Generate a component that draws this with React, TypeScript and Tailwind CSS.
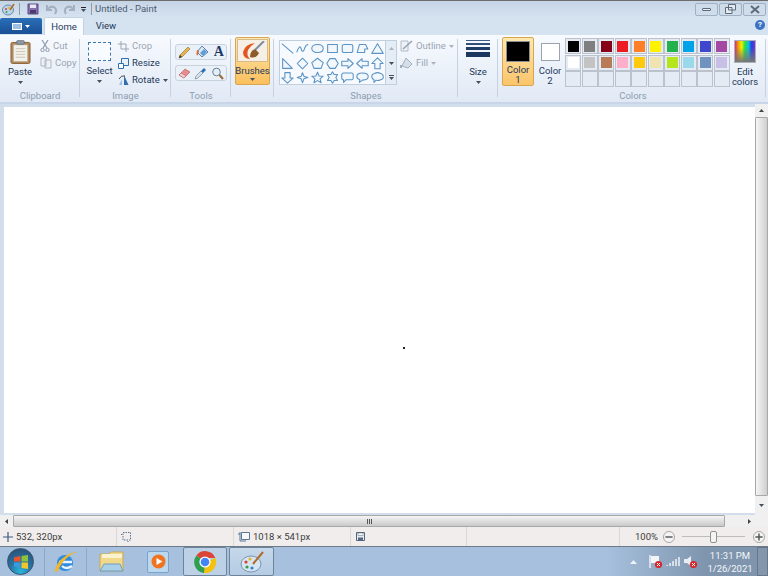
const row1 = ["#000000", "#7f7f7f", "#880015", "#ed1c24", "#ff7f27", "#fff200", "#22b14c", "#00a2e8", "#3f48cc", "#a349a4"];
const row2 = ["#ffffff", "#c3c3c3", "#b97a57", "#ffaec9", "#ffc90e", "#efe4b0", "#b5e61d", "#99d9ea", "#7092be", "#c8bfe7"];

// outlines for the shapes gallery, each in a 15x15 box
const shapes = [
  "M1 2 L14 13",
  "M1 12 C3 5 5 4 6 8 C7 12 9 11 10 7 C11 4 13 3 14 3",
  "M7.5 3 C12 3 14 5 14 7.5 C14 10 12 12 7.5 12 C3 12 1 10 1 7.5 C1 5 3 3 7.5 3 Z",
  "M2 3 H13 V12 H2 Z",
  "M4 3 H11 Q13.5 3 13.5 5 V10 Q13.5 12 11 12 H4 Q1.5 12 1.5 10 V5 Q1.5 3 4 3 Z",
  "M4 3 H11 L13.5 8 L10 8 V12 H1.5 Z",
  "M7.5 2 L14 13 H1 Z",
  "M2 2 L13 13 H2 Z",
  "M7.5 1.5 L13.5 7.5 L7.5 13.5 L1.5 7.5 Z",
  "M7.5 1.5 L14 6.5 L11.5 13 H3.5 L1 6.5 Z",
  "M4.5 2 H10.5 L14 7.5 L10.5 13 H4.5 L1 7.5 Z",
  "M1 5 H8 V2 L14 7.5 L8 13 V10 H1 Z",
  "M14 5 H7 V2 L1 7.5 L7 13 V10 H14 Z",
  "M7.5 1 L14 7.5 H10.5 V13.5 H4.5 V7.5 H1 Z",
  "M4.5 2 H10.5 V8 H14 L7.5 14 L1 8 H4.5 Z",
  "M7.5 2 L9 6 L13.5 7.5 L9 9 L7.5 13.5 L6 9 L1.5 7.5 L6 6 Z",
  "M7.5 1.5 L9.3 5.8 L14 6 L10.4 9 L11.6 13.5 L7.5 11 L3.4 13.5 L4.6 9 L1 6 L5.7 5.8 Z",
  "M7.5 1 L9.3 4.2 L13.2 4.2 L11.3 7.5 L13.2 10.8 L9.3 10.8 L7.5 14 L5.7 10.8 L1.8 10.8 L3.7 7.5 L1.8 4.2 L5.7 4.2 Z",
  "M3 2.5 H12 Q14 2.5 14 4.5 V8 Q14 10 12 10 H6 L3 13 V10 Q1 10 1 8 V4.5 Q1 2.5 3 2.5 Z",
  "M7.5 2.5 C12 2.5 14 4 14 6.5 C14 9 12 10.5 7.5 10.5 L4 13 L4.5 10 C2.5 9.5 1 8.5 1 6.5 C1 4 3 2.5 7.5 2.5 Z",
  "M4 3 Q7.5 1 11 3 Q14 3.5 14 6.5 Q14.5 9.5 11 10 Q8 11.5 6 10.5 L3.5 13 L3.5 10 Q1 9 1 6.5 Q1 3.5 4 3 Z",
];

function Caret({ className = "" }: { className?: string }) {
  return (
    <svg width="5" height="3" viewBox="0 0 5 3" className={className}>
      <path d="M0 0 H5 L2.5 3 Z" fill="#45505e" />
    </svg>
  );
}

function GroupLabel({ children }: { children: string }) {
  return <div className="absolute bottom-0 left-0 right-0 text-center text-[9.5px] leading-[12px] text-[#8d9db0]">{children}</div>;
}

function Separator() {
  return <div className="absolute bottom-[5px] right-0 top-[4px] w-px bg-[#c5d2e2]" />;
}

function Group({ width, label, children }: { width: string; label?: string; children: React.ReactNode }) {
  return (
    <div className={`relative h-full shrink-0 ${width}`}>
      {children}
      {label ? <GroupLabel>{label}</GroupLabel> : null}
      <Separator />
    </div>
  );
}

function PasteIcon() {
  return (
    <svg width="21" height="24" viewBox="0 0 22 25">
      <rect x="1" y="2.5" width="20" height="22" rx="1.5" fill="#b48a5c" stroke="#8a6236" />
      <rect x="3.5" y="5" width="15" height="17.5" fill="#f3f1e8" stroke="#a9a594" strokeWidth="0.6" />
      <path d="M6 9 H16 M6 12 H16 M6 15 H16 M6 18 H16" stroke="#c8c6bb" />
      <rect x="7" y="0.5" width="8" height="4" rx="1" fill="#8d98a6" stroke="#5e6773" strokeWidth="0.6" />
    </svg>
  );
}

function ToolsGrid() {
  return (
    <div className="flex flex-col gap-[5px] pl-[4px] pt-[9px]">
      <div className="flex h-[16px] w-[52px] items-center justify-around rounded-[3px] border border-[#c8d3e0] bg-[#eaf0f8]">
        <svg width="13" height="13" viewBox="0 0 13 13"><path d="M1 12 L2 9 L10 1 L12 3 L4 11 Z" fill="#e8b54a" stroke="#8a6a2e" strokeWidth="0.6" /><path d="M1 12 L2 9 L4 11 Z" fill="#333" /></svg>
        <svg width="14" height="14" viewBox="0 0 14 14"><path d="M7 1 L13 7 L7 12 L2 7 Z" fill="#dfeaf5" stroke="#5a85b2" /><path d="M2 5 Q1 9 2 11 Q3.5 9 4 6 Z" fill="#e0662a" /><path d="M5 8 L9 4 L12 7 L8 11 Z" fill="#5f9fd8" /></svg>
        <span className="font-['Liberation_Serif',serif] text-[14px] font-bold leading-none text-[#1d3a66]">A</span>
      </div>
      <div className="flex h-[16px] w-[52px] items-center justify-around rounded-[3px] border border-[#c8d3e0] bg-[#eaf0f8]">
        <svg width="13" height="13" viewBox="0 0 13 13"><path d="M1 8 L7 2 L12 5 L6 11 Z" fill="#e88a8e" stroke="#a8595d" strokeWidth="0.6" /><path d="M1 8 L3 6 L8 9 L6 11 Z" fill="#f4d3d3" stroke="#a8595d" strokeWidth="0.5" /></svg>
        <svg width="13" height="13" viewBox="0 0 13 13"><path d="M1 12 L2 9 L7 4 L9 6 L4 11 Z" fill="#d6e3ee" stroke="#66788c" strokeWidth="0.6" /><path d="M7 4 L10 1 L12 3 L9 6 Z" fill="#2a6fb5" /></svg>
        <svg width="13" height="13" viewBox="0 0 13 13"><circle cx="5.5" cy="5" r="3.8" fill="#e4eef7" stroke="#6b7f94" /><path d="M8.5 8 L12 12" stroke="#9b6a3a" strokeWidth="2" /></svg>
      </div>
    </div>
  );
}

function Swatch({ color }: { color?: string }) {
  return (
    <div className="h-[16px] w-[16px] border border-[#bbc2cb] bg-[#e4ebf5] p-[1.5px]">
      {color ? <div className="h-full w-full" style={{ background: color }} /> : null}
    </div>
  );
}

function Ribbon() {
  return (
    <div className="flex h-[67px] bg-gradient-to-b from-[#f7fafe] to-[#e1e9f5] text-[9.5px] leading-[12px] text-[#1e395b]">
      <Group width="w-[80px]" label="Clipboard">
        <div className="flex">
          <div className="flex w-[40px] flex-col items-center pt-[5px]">
            <PasteIcon />
            <span className="mt-[2px]">Paste</span>
            <Caret className="mt-[3px]" />
          </div>
          <div className="flex flex-col gap-[5px] pt-[5px] text-[#9aa5b3]">
            <div className="flex h-[12px] items-center gap-[3px]">
              <svg width="10" height="12" viewBox="0 0 10 12"><path d="M2 0 L7 8 M8 0 L3 8" stroke="#8f9bab" strokeWidth="1.2" /><circle cx="2.5" cy="10" r="1.7" fill="none" stroke="#8f9bab" /><circle cx="7.5" cy="10" r="1.7" fill="none" stroke="#8f9bab" /></svg>
              Cut
            </div>
            <div className="flex h-[12px] items-center gap-[3px]">
              <svg width="12" height="12" viewBox="0 0 12 12"><path d="M1 1 H6 V9 H1 Z M5 3 H11 V11 H5 Z" fill="#eef2f7" stroke="#aeb7c3" /></svg>
              Copy
            </div>
          </div>
        </div>
      </Group>

      <Group width="w-[91px]" label="Image">
        <div className="flex pl-[7px]">
          <div className="flex w-[25px] flex-col items-center pt-[7px]">
            <div className="h-[19px] w-[23px] border border-dashed border-[#3f78ae] bg-[#f8fbff]" />
            <span className="mt-[4px]">Select</span>
            <Caret className="mt-[3px]" />
          </div>
          <div className="flex flex-col gap-[5px] pl-[6px] pt-[5px]">
            <div className="flex h-[12px] items-center gap-[3px] text-[#9aa5b3]">
              <svg width="11" height="11" viewBox="0 0 11 11"><path d="M3 0 V8 H11 M0 3 H8 V11" fill="none" stroke="#9aa5b3" /></svg>
              Crop
            </div>
            <div className="flex h-[12px] items-center gap-[3px]">
              <svg width="11" height="11" viewBox="0 0 11 11"><path d="M3.5 .5 H10.5 V7.5 H3.5 Z" fill="#e9f1fa" stroke="#2f6fb0" /><path d="M.5 5.5 H5.5 V10.5 H.5 Z" fill="#fff" stroke="#2f6fb0" /></svg>
              Resize
            </div>
            <div className="flex h-[12px] items-center gap-[3px]">
              <svg width="11" height="12" viewBox="0 0 11 12"><path d="M6 1 L10.5 11 H6 Z" fill="#2f6fb0" /><path d="M4 5 L1 11 H4 Z" fill="#9fc0de" /><path d="M1 5 Q3 1 7 2" fill="none" stroke="#4b4b4b" /></svg>
              <span>Rotate</span>
              <Caret />
            </div>
          </div>
        </div>
      </Group>

      <Group width="w-[60px]" label="Tools">
        <ToolsGrid />
      </Group>

      <Group width="w-[43px]">
        <div className="ml-[4px] mt-[2px] flex h-[48px] w-[35px] flex-col items-center rounded-[2px] border border-[#d8a650] bg-gradient-to-b from-[#fde9ad] to-[#fbbf5c]">
          <div className="mt-[1px] flex h-[23px] w-[31px] items-center justify-center border border-[#d8b98a] bg-[#f5efe6]">
            <svg width="24" height="20" viewBox="0 0 24 20">
              <path d="M14 2 Q4 3 2 11 Q2 18 9 18 Q5 14 7 9 Q9 5 14 2 Z" fill="#e2561f" />
              <path d="M23 0 L14 9" stroke="#7b8da3" strokeWidth="2" />
              <path d="M14 8 Q9 10 9 16 Q15 18 18 12 Z" fill="#8f5a2a" />
            </svg>
          </div>
          <span className="mt-[3px]">Brushes</span>
          <Caret className="mt-[1px]" />
        </div>
      </Group>

      <Group width="w-[184px]" label="Shapes">
        <div className="ml-[5px] mt-[5px] flex h-[45px] w-[118px] border border-[#c0cedd] bg-[#f6f9fd]">
          <div className="grid flex-1 grid-cols-[repeat(7,15px)] grid-rows-[repeat(3,14.5px)]">
            {shapes.map((d) => (
              <svg key={d} width="15" height="15" viewBox="-1 -1 17 17">
                <path d={d} fill="#f2f7fc" stroke="#5a93c5" strokeWidth="1.2" strokeLinejoin="round" />
              </svg>
            ))}
          </div>
          <div className="flex w-[11px] flex-col items-center border-l border-[#c0cedd] bg-[#e4ecf6]">
            <div className="flex h-[15px] items-center"><svg width="5" height="3" viewBox="0 0 5 3"><path d="M0 3 H5 L2.5 0 Z" fill="#a8b3c0" /></svg></div>
            <div className="flex h-[15px] items-center"><Caret /></div>
            <div className="flex h-[13px] flex-col items-center justify-center gap-[1px]"><div className="h-px w-[5px] bg-[#45505e]" /><Caret /></div>
          </div>
        </div>
        <div className="absolute left-[126px] top-[5px] flex flex-col gap-[5px] text-[#9aa5b3]">
          <div className="flex h-[12px] items-center gap-[3px]">
            <svg width="13" height="12" viewBox="0 0 13 12"><path d="M1 1 H8 V11 H1 Z" fill="#eef2f7" stroke="#b0bac6" /><path d="M3 9 L12 1" stroke="#98a5b4" strokeWidth="1.6" /></svg>
            Outline
            <svg width="5" height="3" viewBox="0 0 5 3"><path d="M0 0 H5 L2.5 3 Z" fill="#a8b3c0" /></svg>
          </div>
          <div className="flex h-[12px] items-center gap-[3px]">
            <svg width="13" height="12" viewBox="0 0 13 12"><path d="M6 1 L12 7 L8 11 L2 9 Z" fill="#d6dee8" stroke="#a2afbf" /><path d="M1 8 V11" stroke="#a2afbf" strokeWidth="2" /></svg>
            Fill
            <svg width="5" height="3" viewBox="0 0 5 3"><path d="M0 0 H5 L2.5 3 Z" fill="#a8b3c0" /></svg>
          </div>
        </div>
      </Group>

      <Group width="w-[40px]">
        <div className="flex flex-col items-center pt-[5px]">
          <div className="flex w-[24px] flex-col gap-[2px]">
            <div className="h-px bg-[#3c5b85]" />
            <div className="h-[2px] bg-[#2f4e78]" />
            <div className="h-[3px] bg-[#1f3c66]" />
            <div className="h-[5px] bg-[#1c3860]" />
          </div>
          <span className="mt-[9px]">Size</span>
          <Caret className="mt-[3px]" />
        </div>
      </Group>

      <div className="relative flex h-full flex-1 pl-[4px] pt-[2px]">
        <div className="flex h-[49px] w-[32px] flex-col items-center rounded-[2px] border border-[#d8a650] bg-gradient-to-b from-[#fde9ad] to-[#fbc46a] pt-[3px]">
          <div className="h-[24px] w-[24px] border border-[#8a8f96] bg-black" />
          <span className="mt-[3px] text-center leading-[10px]">Color<br />1</span>
        </div>
        <div className="ml-[3px] flex w-[26px] flex-col items-center pt-[6px]">
          <div className="h-[18px] w-[19px] border border-[#9aa3ae] bg-white" />
          <span className="mt-[5px] text-center leading-[10px]">Color<br />2</span>
        </div>
        <div className="ml-[2px] mt-[1px] grid grid-cols-[repeat(10,16.5px)] grid-rows-[repeat(3,16.5px)]">
          {row1.map((c) => <Swatch key={c} color={c} />)}
          {row2.map((c) => <Swatch key={c} color={c} />)}
          {Array.from({ length: 10 }, (_, i) => <Swatch key={i} />)}
        </div>
        <div className="ml-[2px] flex w-[26px] flex-col items-center pt-[3px]">
          <div className="h-[23px] w-[22px] border border-[#aab2bc] bg-[linear-gradient(to_bottom,transparent_30%,#777777),linear-gradient(to_right,#e0218a,#f0a000,#f0f000,#20e040,#10c0e0,#2040e0,#8030d0)]" />
          <span className="mt-[4px] text-center leading-[10px]">Edit<br />colors</span>
        </div>
        <GroupLabel>Colors</GroupLabel>
        <div className="absolute bottom-[5px] right-[2px] top-[4px] w-px bg-[#c5d2e2]" />
      </div>
    </div>
  );
}

function TitleBar() {
  return (
    <div className="flex h-[17px] items-center border-t border-[#6d6d6d] bg-gradient-to-b from-[#c6d5e6] to-[#d5e2f0] pl-[2px] text-[#4d5c6e]">
      <svg width="13" height="13" viewBox="0 0 13 13"><ellipse cx="6" cy="7" rx="5.5" ry="5" fill="#b8d4e8" stroke="#6b8aa8" /><circle cx="4" cy="6" r="1" fill="#d8412f" /><circle cx="7" cy="5" r="1" fill="#e5b42e" /><circle cx="4.5" cy="9" r="1" fill="#3b9a4a" /><path d="M8 7 L12 1" stroke="#b06a2a" strokeWidth="1.5" /></svg>
      <div className="ml-[4px] mr-[4px] h-[12px] w-px bg-[#8d9bab]" />
      <svg className="ml-[3px]" width="12" height="12" viewBox="0 0 12 12"><path d="M1 1 H11 V11 H1 Z" fill="#8a6fae" stroke="#5b4a80" /><rect x="3" y="1.5" width="6" height="3.5" fill="#e8e8f0" /><rect x="3" y="7" width="6" height="3.5" fill="#4a3a70" /></svg>
      <svg className="ml-[7px]" width="12" height="11" viewBox="0 0 12 11"><path d="M1 1 V6 H6 M1.5 5.5 Q5 1 8.5 3.5 Q11.5 6 9 10" fill="none" stroke="#a4b0be" strokeWidth="2" /></svg>
      <svg className="ml-[5px]" width="12" height="11" viewBox="0 0 12 11"><path d="M11 1 V6 H6 M10.5 5.5 Q7 1 3.5 3.5 Q.5 6 3 10" fill="none" stroke="#a4b0be" strokeWidth="2" /></svg>
      <div className="ml-[6px] flex flex-col items-center gap-[1px]"><div className="h-px w-[5px] bg-[#222]" /><Caret /></div>
      <div className="ml-[5px] mr-[3px] h-[12px] w-px bg-[#8d9bab]" />
      <span className="text-[9.5px] leading-none">Untitled - Paint</span>
      <div className="ml-auto flex pr-[2px]">
        <WindowButton><div className="h-[3px] w-[9px] rounded-[1px] border border-[#5d6b7a] bg-[#e6edf5]" /></WindowButton>
        <WindowButton><svg width="11" height="10" viewBox="0 0 11 10"><path d="M3.5 .5 H10.5 V6 H3.5 Z M.5 3.5 H7 V9.5 H.5 Z" fill="#e4ebf3" stroke="#5d6b7a" /></svg></WindowButton>
        <WindowButton><svg width="10" height="9" viewBox="0 0 10 9"><path d="M1 1 L9 8 M9 1 L1 8" stroke="#5d6b7a" strokeWidth="2" /></svg></WindowButton>
      </div>
    </div>
  );
}

function WindowButton({ children }: { children: React.ReactNode }) {
  return <div className="ml-[1px] flex h-[13px] w-[23px] items-center justify-center rounded-[2px] border border-[#9fb0c2] bg-[#cfdcea]">{children}</div>;
}

function TabRow() {
  return (
    <div className="flex h-[18px] items-end bg-[#d5e2f0] text-[9.5px] leading-none text-[#1e395b]">
      <div className="mb-px flex h-[16px] w-[42px] items-center justify-center gap-[3px] rounded-t-[2px] bg-gradient-to-b from-[#2a6fb8] to-[#1a4f94]">
        <div className="h-[7px] w-[10px] border border-white bg-[#9fc0e4]" />
        <svg width="5" height="3" viewBox="0 0 5 3"><path d="M0 0 H5 L2.5 3 Z" fill="#fff" /></svg>
      </div>
      <div className="ml-[2px] flex h-[18px] w-[40px] items-center justify-center rounded-t-[2px] border border-b-0 border-[#c4d2e2] bg-[#f7fafe]">Home</div>
      <div className="flex h-[18px] w-[44px] items-center justify-center">View</div>
      <div className="mb-[5px] ml-auto mr-[3px] flex h-[10px] w-[10px] items-center justify-center rounded-full bg-[#3a74c4] text-[8px] font-bold text-white">?</div>
    </div>
  );
}

function VScrollbar() {
  return (
    <div className="flex w-[13px] flex-col items-center bg-[#f0f0f0]">
      <div className="flex h-[13px] items-center"><svg width="5" height="3" viewBox="0 0 5 3"><path d="M0 3 H5 L2.5 0 Z" fill="#444" /></svg></div>
      <div className="w-full flex-1 rounded-[1px] border border-[#a8a8a8] bg-gradient-to-r from-[#f5f5f5] to-[#cfcfcf]" />
      <div className="flex h-[19px] items-center"><Caret /></div>
    </div>
  );
}

function HScrollbar() {
  return (
    <div className="flex h-[12px] items-center bg-[#f0f0f0]">
      <div className="flex w-[13px] justify-center"><svg width="3" height="5" viewBox="0 0 3 5"><path d="M3 0 V5 L0 2.5 Z" fill="#444" /></svg></div>
      <div className="flex h-[12px] w-[712px] items-center justify-center rounded-[1px] border border-[#a8a8a8] bg-gradient-to-b from-[#f5f5f5] to-[#c9c9c9]">
        <div className="flex gap-px"><div className="h-[5px] w-px bg-[#555]" /><div className="h-[5px] w-px bg-[#555]" /><div className="h-[5px] w-px bg-[#555]" /></div>
      </div>
      <div className="flex w-[30px] justify-center pl-[18px]"><svg width="3" height="5" viewBox="0 0 3 5"><path d="M0 0 V5 L3 2.5 Z" fill="#444" /></svg></div>
      <div className="flex-1 bg-[#f0f0f0]" />
    </div>
  );
}

function StatusCell({ width, children }: { width: string; children?: React.ReactNode }) {
  return <div className={`flex h-full shrink-0 items-center gap-[3px] border-r border-[#dcd8d6] pl-[3px] ${width}`}>{children}</div>;
}

function StatusBar() {
  return (
    <div className="flex h-[19px] bg-[#f0edec] text-[9.5px] leading-none text-[#3c3c3c]">
      <StatusCell width="w-[117px]">
        <svg width="10" height="10" viewBox="0 0 10 10"><path d="M5 0 V10 M0 5 H10" stroke="#3e5c7e" strokeWidth="1.2" /></svg>
        532, 320px
      </StatusCell>
      <StatusCell width="w-[117px]">
        <svg className="ml-[1px]" width="10" height="10" viewBox="0 0 10 10"><path d="M2 .5 H9.5 V8 H2 Z" fill="none" stroke="#5b7896" strokeDasharray="1.5 1" /><path d="M0 2.5 H1 M7 9 V10" stroke="#5b7896" /></svg>
      </StatusCell>
      <StatusCell width="w-[117px]">
        <svg className="ml-[1px]" width="12" height="10" viewBox="0 0 12 10"><path d="M3.5 .5 H11.5 V7.5 H3.5 Z" fill="#f6f8fb" stroke="#5b7896" /><path d="M0 2 H2 M2 0 V9 H8" fill="none" stroke="#5b7896" /></svg>
        1018 × 541px
      </StatusCell>
      <StatusCell width="w-[116px]">
        <svg className="ml-[2px]" width="9" height="9" viewBox="0 0 9 9"><path d="M.5 .5 H8.5 V8.5 H.5 Z" fill="#e7ecf2" stroke="#55677b" /><rect x="2" y="1" width="5" height="2.5" fill="#fff" stroke="#55677b" strokeWidth="0.5" /><rect x="2" y="5.5" width="5" height="3" fill="#55677b" /></svg>
      </StatusCell>
      <StatusCell width="w-[153px]" />
      <div className="flex flex-1 items-center pl-[15px]">
        <span className="w-[28px]">100%</span>
        <ZoomButton>
          <path d="M2 5 H8" stroke="#555" strokeWidth="1.2" />
        </ZoomButton>
        <div className="relative ml-[7px] mr-[8px] h-[10px] w-[63px]">
          <div className="absolute left-0 right-0 top-[4px] h-px bg-[#bdbdbd]" />
          <div className="absolute left-[28px] top-[-1px] h-[12px] w-[7px] rounded-[2px] border border-[#8f8f8f] bg-[#f4f4f4]" />
        </div>
        <ZoomButton>
          <path d="M2 5 H8 M5 2 V8" stroke="#555" strokeWidth="1.2" />
        </ZoomButton>
      </div>
    </div>
  );
}

function ZoomButton({ children }: { children: React.ReactNode }) {
  return (
    <svg width="12" height="12" viewBox="0 0 10 10">
      <circle cx="5" cy="5" r="4.6" fill="#f4f4f4" stroke="#9a9a9a" strokeWidth="0.7" />
      {children}
    </svg>
  );
}

function ChromeIcon() {
  return (
    <svg width="24" height="24" viewBox="0 0 24 24">
      <path d="M12 12 L3.4 5.5 A11 11 0 0 1 22.4 8 H12 Z" fill="#db4437" />
      <path d="M12 12 L22.4 8 A11 11 0 0 1 11 23 Z" fill="#f4c20d" />
      <path d="M12 12 L11 23 A11 11 0 0 1 3.4 5.5 Z" fill="#2f9e4f" />
      <circle cx="12" cy="12" r="5.6" fill="#fff" />
      <circle cx="12" cy="12" r="4.3" fill="#4285f4" />
    </svg>
  );
}

function Taskbar() {
  return (
    <div className="flex h-[30px] items-center border-t border-[#6d7a88] bg-[linear-gradient(to_right,#a6c0dd_0%,#a6c0dd_79%,#7f95ae_92%,#7f95ae_100%)]">
      <div className="ml-[7px] flex h-[27px] w-[27px] items-center justify-center rounded-full border border-[#38506c] bg-[radial-gradient(circle_at_50%_90%,#25b7e0_0%,#2a6f9e_45%,#274a6e_100%)]">
        <svg width="14" height="14" viewBox="0 0 13 13">
          <path d="M0 2 L6 1 V6 H0 Z" fill="#e8522e" />
          <path d="M7 1 L13 0 V6 H7 Z" fill="#8ac43f" />
          <path d="M0 7 H6 V12 L0 11 Z" fill="#3a9bdc" />
          <path d="M7 7 H13 V13 L7 12 Z" fill="#f5c32c" />
        </svg>
      </div>
      <div className="ml-[10px] h-[28px] w-px bg-[#8fa7c2]" />
      <svg className="ml-[9px]" width="24" height="24" viewBox="0 0 24 24">
        <circle cx="11" cy="13" r="8" fill="#2f8be0" />
        <path d="M5 12 H18 M8 16 Q12 20 18 16" fill="none" stroke="#e9f4ff" strokeWidth="2.4" />
        <path d="M1 22 C1 12 14 2 23 2 C18 3 8 10 4 21 Z" fill="#f0b72a" />
      </svg>
      <div className="ml-[8px] h-[28px] w-px bg-[#8fa7c2]" />
      <svg className="ml-[12px]" width="26" height="22" viewBox="0 0 26 22">
        <path d="M1 3 H10 L12 1 H24 V20 H1 Z" fill="#f2d98a" stroke="#c9a95a" />
        <rect x="3" y="3" width="20" height="4" fill="#fbf2cf" />
        <path d="M5 13 H21 L24 20 H1 Z" fill="#a9d0e8" stroke="#6d9fc0" />
      </svg>
      <div className="ml-[22px] flex h-[22px] w-[22px] items-center justify-center rounded-[2px] border border-[#7aa3cc] bg-[#bcd8ef]">
        <svg width="15" height="15" viewBox="0 0 15 15"><circle cx="7.5" cy="7.5" r="7" fill="#f0731f" /><path d="M5.5 4 L11.5 7.5 L5.5 11 Z" fill="#fff" /></svg>
      </div>
      <div className="ml-[14px] flex h-[29px] w-[44px] items-center justify-center rounded-[2px] border border-[#6f849b] bg-[#bcd0e6]">
        <ChromeIcon />
      </div>
      <div className="ml-[2px] flex h-[29px] w-[45px] items-center justify-center rounded-[2px] border border-[#6f849b] bg-gradient-to-b from-[#c6d8ea] to-[#b4cbe3]">
        <svg width="24" height="22" viewBox="0 0 24 22">
          <ellipse cx="11" cy="13" rx="10" ry="8" fill="#d5e6f2" stroke="#7b95ad" />
          <circle cx="6" cy="11" r="1.6" fill="#d8412f" />
          <circle cx="10" cy="8" r="1.6" fill="#e5b42e" />
          <circle cx="7" cy="16" r="1.6" fill="#3b9a4a" />
          <circle cx="12" cy="17" r="1.6" fill="#3a7fd0" />
          <path d="M13 13 L23 1" stroke="#b06a2a" strokeWidth="2" />
        </svg>
      </div>
      <div className="ml-auto flex items-center">
        <svg width="7" height="4" viewBox="0 0 7 4"><path d="M0 4 H7 L3.5 0 Z" fill="#eef3f8" /></svg>
        <svg className="ml-[11px]" width="15" height="15" viewBox="0 0 15 15">
          <path d="M2 1 V14" stroke="#f2f4f7" strokeWidth="1.4" />
          <path d="M3 2 H11 V9 H3 Z" fill="#f2f4f7" />
          <circle cx="10.5" cy="10.5" r="3.6" fill="#d8262a" />
          <path d="M9 9 L12 12 M12 9 L9 12" stroke="#fff" />
        </svg>
        <svg className="ml-[3px]" width="14" height="11" viewBox="0 0 14 11"><path d="M1 10 V9 M4 10 V7 M7 10 V5 M10 10 V3 M13 10 V1" stroke="#e9edf2" strokeWidth="1.6" /></svg>
        <svg className="ml-[3px]" width="15" height="15" viewBox="0 0 15 15">
          <path d="M1 5 H4 L8 2 V12 L4 9 H1 Z" fill="#e9edf2" />
          <circle cx="10.5" cy="10.5" r="3.6" fill="#d8262a" />
          <path d="M9 9 L12 12 M12 9 L9 12" stroke="#fff" />
        </svg>
        <div className="ml-[12px] flex w-[40px] flex-col items-center whitespace-nowrap text-[9.5px] leading-[13px] text-[#f4f7fa]">
          <span>11:31 PM</span>
          <span>1/26/2021</span>
        </div>
        <div className="ml-[7px] h-[29px] w-[11px] border border-[#66778a] bg-[#8396ab]" />
      </div>
    </div>
  );
}

export default function App() {
  return (
    <div className="flex h-[576px] w-[768px] flex-col overflow-hidden bg-[#d5e2f0] font-['Roboto',sans-serif]">
      <TitleBar />
      <TabRow />
      <Ribbon />
      <div className="h-[2px] bg-[#c8d6e8]" />
      <div className="flex flex-1">
        <div className="flex flex-1 flex-col bg-[#d3deec] pb-[2px] pl-[4px] pt-[3px]">
          <div className="relative flex-1 bg-white">
            <div className="absolute left-[399px] top-[240px] h-[2px] w-[2px] bg-[#222]" />
          </div>
        </div>
        <VScrollbar />
      </div>
      <HScrollbar />
      <StatusBar />
      <Taskbar />
    </div>
  );
}
